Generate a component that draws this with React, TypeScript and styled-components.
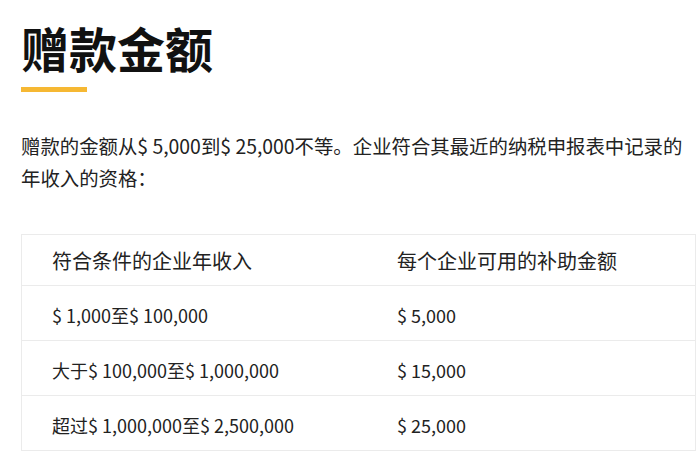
import React from 'react'
import styled, { createGlobalStyle } from 'styled-components'

const GlobalStyle = createGlobalStyle`
  html, body {
    margin: 0;
    padding: 0;
    background: #fff;
  }
  body {
    font-family: "Noto Sans CJK SC", "Noto Sans", sans-serif;
    color: #222;
  }
`

const Page = styled.div`
  padding: 19px 0 0 21px;
`

const Title = styled.h2`
  margin: 0;
  font-size: 48px;
  line-height: 1.2;
  font-weight: 700;
  color: #111;
`

const Accent = styled.div`
  width: 66px;
  height: 5px;
  margin-top: 10px;
  background: #f6b833;
`

const Lead = styled.p`
  margin: 38px 0 0;
  font-size: 19.4px;
  line-height: 32px;
  color: #222;
`

const Table = styled.table`
  margin-top: 40px;
  width: 675px;
  border-collapse: collapse;
  border: 1px solid #ebebeb;
  line-height: 32px;
  color: #222;
`

const HeadCell = styled.th<{ $w?: number }>`
  text-align: left;
  font-size: 20px;
  font-weight: 400;
  padding: 10px 30px 8px;
  border-bottom: 1px solid #ebebeb;
  width: ${(p) => (p.$w ? `${p.$w}px` : 'auto')};
`

const Cell = styled.td`
  font-size: 18px;
  padding: 13px 30px 9px;
  border-bottom: 1px solid #ebebeb;
`

const rows = [
  ['$ 1,000至$ 100,000', '$ 5,000'],
  ['大于$ 100,000至$ 1,000,000', '$ 15,000'],
  ['超过$ 1,000,000至$ 2,500,000', '$ 25,000'],
]

export default function App() {
  return (
    <>
      <GlobalStyle />
      <Page>
        <Title>赠款金额</Title>
        <Accent />
        <Lead>
          赠款的金额从$ 5,000到$ 25,000不等。企业符合其最近的纳税申报表中记录的年收入的资格：
        </Lead>
        <Table>
          <thead>
            <tr>
              <HeadCell $w={285}>符合条件的企业年收入</HeadCell>
              <HeadCell>每个企业可用的补助金额</HeadCell>
            </tr>
          </thead>
          <tbody>
            {rows.map(([range, amount]) => (
              <tr key={range}>
                <Cell>{range}</Cell>
                <Cell>{amount}</Cell>
              </tr>
            ))}
          </tbody>
        </Table>
      </Page>
    </>
  )
}
